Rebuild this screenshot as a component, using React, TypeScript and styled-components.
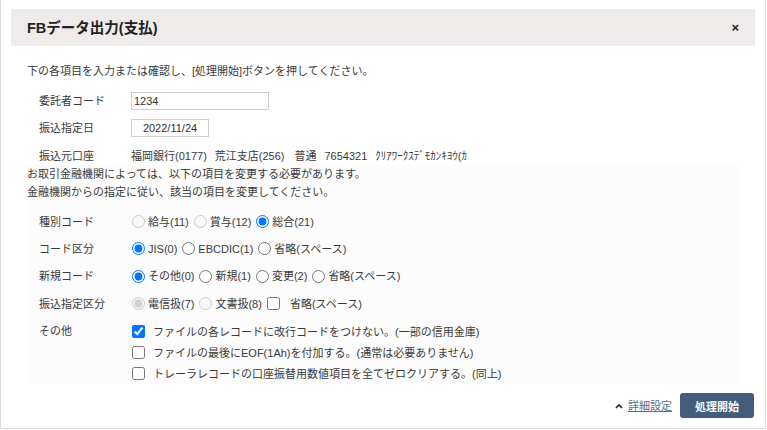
import React from "react";
import styled, { createGlobalStyle } from "styled-components";

const Global = createGlobalStyle`
  html, body { margin: 0; padding: 0; background: #ffffff; }
  body {
    font-family: "Liberation Sans", "Noto Sans CJK JP", sans-serif;
    font-size: 11px;
    color: #3a3a3a;
  }
  * { box-sizing: border-box; }
`;

const Modal = styled.div`
  width: 766px;
  height: 429px;
  border: 1px solid #dcdcdc;
  border-top: none;
  background: #ffffff;
  padding: 9px 10px 0 10px;
  display: flex;
  flex-direction: column;
`;

const Header = styled.div`
  height: 37px;
  background: #eeebea;
  padding: 0 16px 0 16px;
  display: flex;
  align-items: center;
  justify-content: space-between;
`;

const Title = styled.h1`
  margin: 0;
  font-size: 14.5px;
  font-weight: 700;
  color: #222222;
  line-height: 18px;
`;

const Close = styled.span`
  font-size: 13px;
  font-weight: 700;
  color: #222222;
  line-height: 12px;
  cursor: pointer;
`;

const Body = styled.div`
  padding: 0 16px;
  display: flex;
  flex-direction: column;
`;

const Intro = styled.p`
  margin: 16px 0 7px 0;
  line-height: 18px;
`;

const Row = styled.div<{ $h?: number; $mt?: number }>`
  display: flex;
  align-items: center;
  height: ${(p) => p.$h ?? 27}px;
  margin-top: ${(p) => p.$mt ?? 0}px;
  padding-left: 12px;
`;

const Label = styled.div`
  width: 92px;
  flex: none;
  line-height: 18px;
`;

const TextInput = styled.input<{ $w: number; $center?: boolean }>`
  width: ${(p) => p.$w}px;
  height: 18px;
  border: 1px solid #cfcfcf;
  padding: 0 2px;
  font-family: "Liberation Sans", "Noto Sans CJK JP", sans-serif;
  font-size: 11px;
  color: #333333;
  text-align: ${(p) => (p.$center ? "center" : "left")};
  outline: none;
  background: #ffffff;
`;

const BankLine = styled.div`
  display: flex;
  line-height: 18px;
  white-space: nowrap;
`;

const BankPart = styled.span<{ $gap: number }>`
  margin-right: ${(p) => p.$gap}px;
`;

const Panel = styled.div`
  background: #fcfcfc;
  display: flex;
  flex-direction: column;
`;

const Note = styled.p`
  margin: 0;
  line-height: 18px;
`;

const Notes = styled.div`
  margin-bottom: 7px;
`;

const Options = styled.div`
  display: flex;
  align-items: center;
`;

const Option = styled.label`
  display: inline-flex;
  align-items: center;
  margin-right: 4px;
  line-height: 18px;
  white-space: nowrap;
`;

const Radio = styled.input.attrs({ type: "radio" })`
  width: 13px;
  height: 13px;
  margin: 0 3px 0 1px;
`;

const Check = styled.input.attrs({ type: "checkbox" })<{ $gap?: number }>`
  width: 13px;
  height: 13px;
  margin: 0 ${(p) => p.$gap ?? 8}px 0 1px;
`;

const OtherRow = styled.div`
  display: flex;
  align-items: flex-start;
  padding-left: 12px;
  margin-top: 4px;
`;

const OtherLabel = styled(Label)`
  padding-top: 1px;
`;

const CheckList = styled.div`
  display: flex;
  flex-direction: column;
`;

const CheckItem = styled.label`
  display: flex;
  align-items: center;
  height: 21px;
  line-height: 18px;
  white-space: nowrap;
`;

const Footer = styled.div`
  display: flex;
  justify-content: flex-end;
  align-items: center;
  margin-top: 9px;
  padding-right: 1px;
`;

const DetailLink = styled.a`
  display: inline-flex;
  align-items: center;
  color: #566f88;
  font-size: 11px;
  margin-right: 8px;
  cursor: pointer;
`;

const Chevron = styled.svg`
  width: 8px;
  height: 6px;
  margin-right: 5px;
`;

const LinkText = styled.span`
  text-decoration: underline;
  line-height: 18px;
`;

const StartButton = styled.button`
  width: 74px;
  height: 25px;
  border: none;
  border-radius: 3px;
  background: #435d7a;
  color: #ffffff;
  font-family: "Liberation Sans", "Noto Sans CJK JP", sans-serif;
  font-size: 11px;
  font-weight: 700;
  cursor: pointer;
`;

export default function App() {
  return (
    <>
      <Global />
      <Modal>
        <Header>
          <Title>FBデータ出力(支払)</Title>
          <Close>×</Close>
        </Header>
        <Body>
          <Intro>下の各項目を入力または確認し、[処理開始]ボタンを押してください。</Intro>
          <Row>
            <Label>委託者コード</Label>
            <TextInput $w={138} defaultValue="1234" />
          </Row>
          <Row>
            <Label>振込指定日</Label>
            <TextInput $w={78} $center defaultValue="2022/11/24" />
          </Row>
          <Row $h={18} $mt={6}>
            <Label>振込元口座</Label>
            <BankLine>
              <BankPart $gap={8}>福岡銀行(0177)</BankPart>
              <BankPart $gap={10}>荒江支店(256)</BankPart>
              <BankPart $gap={8}>普通</BankPart>
              <BankPart $gap={8}>7654321</BankPart>
              <BankPart $gap={0}>ｸﾘｱﾜｰｸｽﾃﾞﾓｶﾝｷﾖｳ(ｶ</BankPart>
            </BankLine>
          </Row>
          <Panel>
            <Notes>
              <Note>お取引金融機関によっては、以下の項目を変更する必要があります。</Note>
              <Note>金融機関からの指定に従い、該当の項目を変更してください。</Note>
            </Notes>
            <Row>
              <Label>種別コード</Label>
              <Options>
                <Option><Radio name="shubetsu" disabled /><span>給与(11)</span></Option>
                <Option><Radio name="shubetsu" disabled /><span>賞与(12)</span></Option>
                <Option><Radio name="shubetsu" defaultChecked /><span>総合(21)</span></Option>
              </Options>
            </Row>
            <Row>
              <Label>コード区分</Label>
              <Options>
                <Option><Radio name="code" defaultChecked /><span>JIS(0)</span></Option>
                <Option><Radio name="code" /><span>EBCDIC(1)</span></Option>
                <Option><Radio name="code" /><span>省略(スペース)</span></Option>
              </Options>
            </Row>
            <Row $h={28}>
              <Label>新規コード</Label>
              <Options>
                <Option><Radio name="shinki" defaultChecked /><span>その他(0)</span></Option>
                <Option><Radio name="shinki" /><span>新規(1)</span></Option>
                <Option><Radio name="shinki" /><span>変更(2)</span></Option>
                <Option><Radio name="shinki" /><span>省略(スペース)</span></Option>
              </Options>
            </Row>
            <Row>
              <Label>振込指定区分</Label>
              <Options>
                <Option><Radio name="kubun" disabled defaultChecked /><span>電信扱(7)</span></Option>
                <Option><Radio name="kubun" disabled /><span>文書扱(8)</span></Option>
                <Option><Check $gap={10} /><span>省略(スペース)</span></Option>
              </Options>
            </Row>
            <OtherRow>
              <OtherLabel>その他</OtherLabel>
              <CheckList>
                <CheckItem><Check defaultChecked /><span>ファイルの各レコードに改行コードをつけない。(一部の信用金庫)</span></CheckItem>
                <CheckItem><Check /><span>ファイルの最後にEOF(1Ah)を付加する。(通常は必要ありません)</span></CheckItem>
                <CheckItem><Check /><span>トレーラレコードの口座振替用数値項目を全てゼロクリアする。(同上)</span></CheckItem>
              </CheckList>
            </OtherRow>
          </Panel>
        </Body>
        <Footer>
          <DetailLink>
            <Chevron viewBox="0 0 8 6">
              <path d="M1 5 L4 2 L7 5" fill="none" stroke="#222" strokeWidth="1.6" />
            </Chevron>
            <LinkText>詳細設定</LinkText>
          </DetailLink>
          <StartButton>処理開始</StartButton>
        </Footer>
      </Modal>
    </>
  );
}
